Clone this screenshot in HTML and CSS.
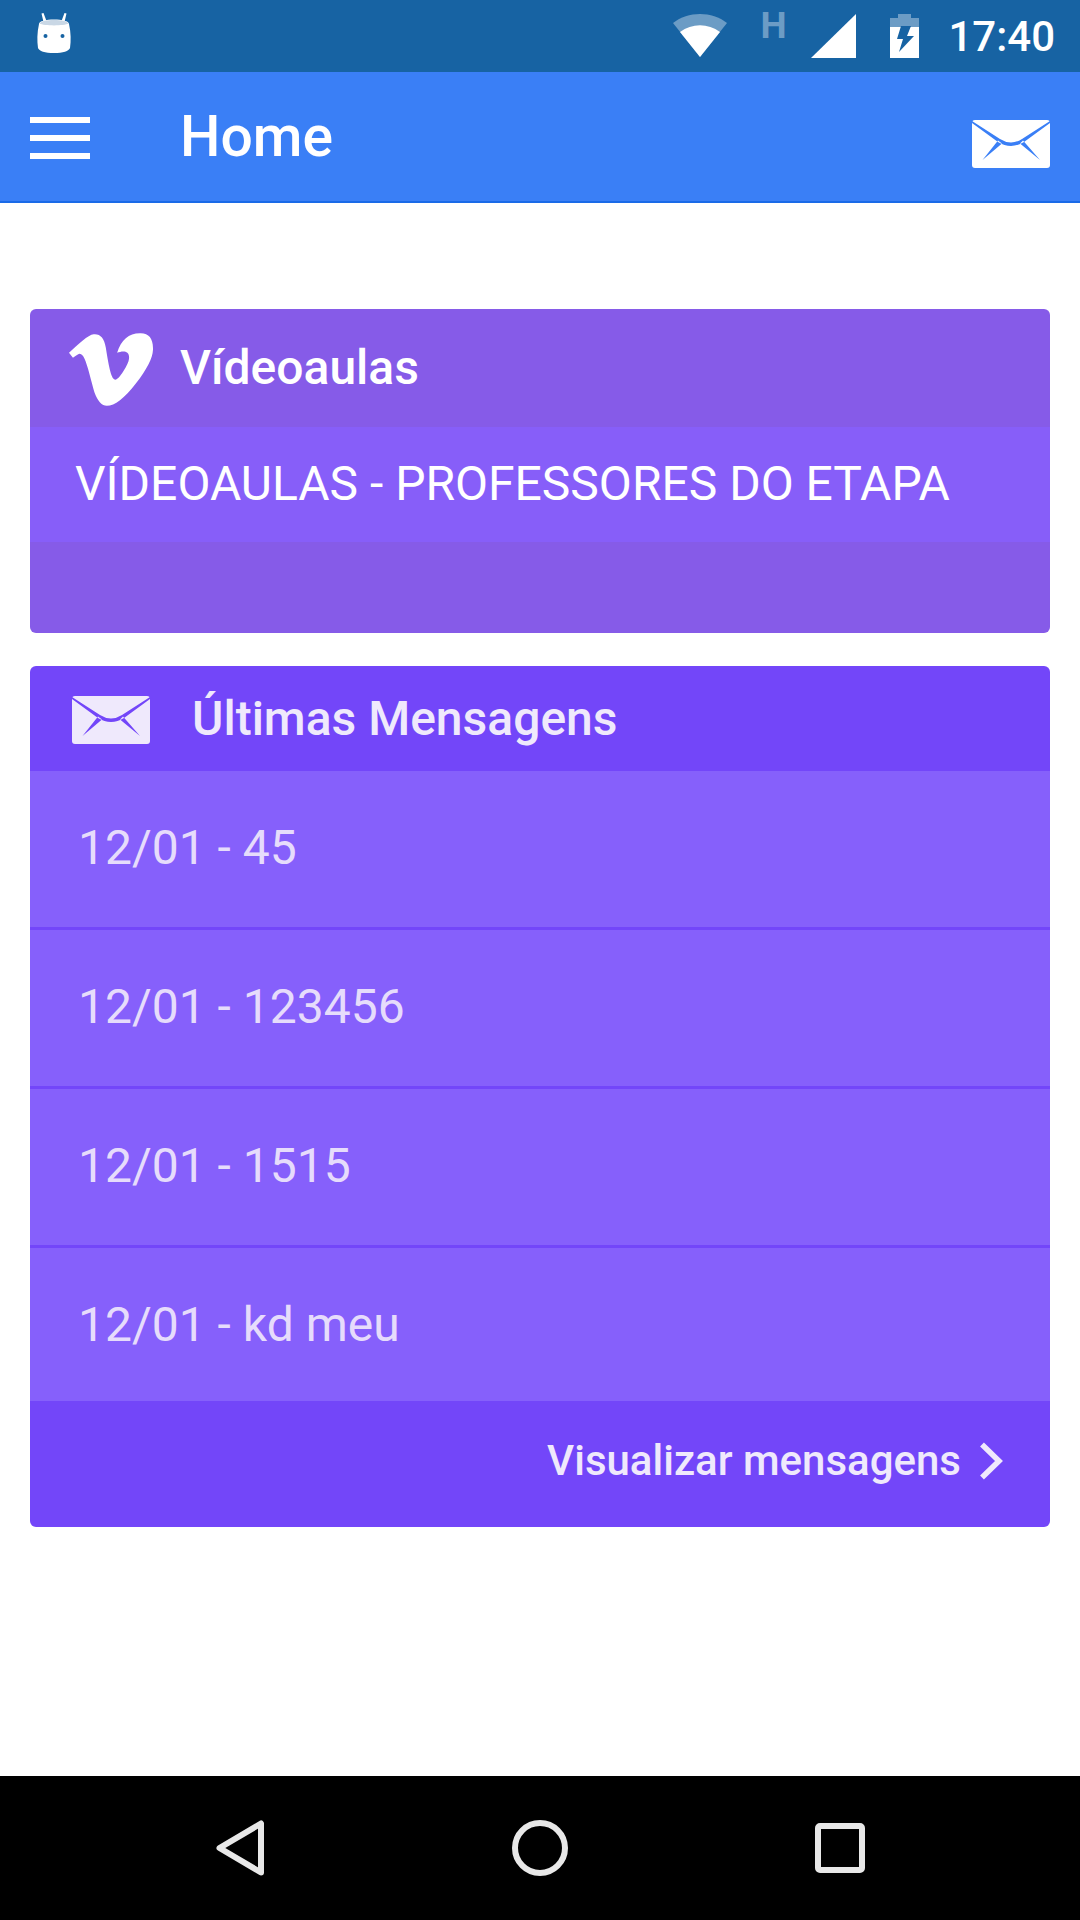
FILE: index.html
```html
<!DOCTYPE html>
<html lang="pt">
<head>
<meta charset="utf-8">
<title>Home</title>
<link rel="stylesheet" href="styles.css">
</head>
<body>
<div class="screen">
  <header class="status">
    <svg class="ic-android" viewBox="0 0 34 40"><path class="w" d="M6.500 9 4.500 0.500 6.500 0 9.500 8ZM27.500 9 29.500 0.500 27.500 0 24.500 8Z"/><path class="w" d="M2 11C2 8 9 6.500 17 6.500S32 8 32 11C34 20 34 28 33 35 32 38 26 40 17 40S2 38 1 35C0 28 0 20 2 11Z"/><path class="dim" d="M2.500 10.500C4 8 10 7 17 7S30 8 31.500 10.500C27 13 7 13 2.500 10.500Z"/><circle class="eye" cx="8.500" cy="23" r="2"/><circle class="eye" cx="25.500" cy="23" r="2"/></svg>
    <span class="status-fill"></span>
    <svg class="ic-wifi" viewBox="0 0 54 43"><path class="faint" d="M27 43 0 9C15-3 39-3 54 9Z"/><path class="w" d="M27 43 7 18C19 9 35 9 47 18Z"/></svg>
    <span class="net">H</span>
    <svg class="ic-signal" viewBox="0 0 45 44"><path class="w" d="M45 0V44H0Z"/></svg>
    <svg class="ic-batt" viewBox="0 0 29 44"><path class="faint" d="M8 0H21V4H29V13H0V4H8Z"/><path class="w" d="M0 13H29V44H0Z"/><path class="cut" d="M11 12H21L17 22H24L9 38 13 25H7Z"/></svg>
    <span class="clock">17:40</span>
  </header>

  <nav class="appbar">
    <div class="burger"><i></i><i></i><i></i></div>
    <h1 class="title">Home</h1>
    <svg class="env env-app" viewBox="0 0 78 48"><rect class="env-body" width="78" height="48" rx="3"/><path class="env-line" d="M0 1 28 19Q39 26 50 19L78 1V3L52 22Q39 30 26 22L0 3ZM26 20.500 10.500 40 30 23.500ZM48 23.500 68 40 51 20.500Z"/></svg>
  </nav>

  <main class="content">
    <section class="card card-video">
      <div class="card-head head-video">
        <svg class="vimeo" viewBox="0 64 448 388"><path d="M447.800 153.600c-2 43.600-32.400 103.300-91.400 179.100-60.900 79.200-112.400 118.800-154.600 118.800-26.100 0-48.200-24.100-66.300-72.300C100.300 250 85.300 174.300 56.200 174.300c-3.400 0-15.100 7.100-35.200 21.100L0 168.200c51.600-45.300 100.900-95.700 131.800-98.500 34.900-3.400 56.300 20.500 64.400 71.500 28.700 181.500 41.400 208.900 93.600 126.700 18.700-29.600 28.800-52.100 30.200-67.600 4.800-45.900-35.800-42.800-63.300-31 22-72.100 64.100-107.100 126.200-105.100 45.800 1.200 67.500 31.100 64.900 89.400z"/></svg>
        <h2 class="card-title">Vídeoaulas</h2>
      </div>
      <div class="video-row">VÍDEOAULAS - PROFESSORES DO ETAPA</div>
      <div class="video-foot"></div>
    </section>

    <section class="card card-msg">
      <div class="card-head head-msg">
        <svg class="env env-msg" viewBox="0 0 78 48"><rect class="env-body" width="78" height="48" rx="3"/><path class="env-line" d="M0 1 28 19Q39 26 50 19L78 1V3L52 22Q39 30 26 22L0 3ZM26 20.500 10.500 40 30 23.500ZM48 23.500 68 40 51 20.500Z"/></svg>
        <h2 class="card-title">Últimas Mensagens</h2>
      </div>
      <ul class="msgs">
        <li class="msg">12/01 - 45</li>
        <li class="msg">12/01 - 123456</li>
        <li class="msg">12/01 - 1515</li>
        <li class="msg">12/01 - kd meu</li>
      </ul>
      <div class="card-foot">
        <span class="more">Visualizar mensagens</span>
        <svg class="chev" viewBox="0 0 24 38"><path d="M3 2.500 20 19 3 35.500"/></svg>
      </div>
    </section>
  </main>

  <footer class="navbar">
    <svg class="nav-ic nav-back" viewBox="0 0 48 56"><path d="M45 3.500V52.500L3.500 28Z"/></svg>
    <svg class="nav-ic nav-home" viewBox="0 0 56 56"><circle cx="28" cy="28" r="25"/></svg>
    <svg class="nav-ic nav-recent" viewBox="0 0 50 50"><rect x="3" y="3" width="44" height="44" rx="2"/></svg>
  </footer>
</div>
</body>
</html>
```

FILE: styles.css
```css
* { box-sizing: border-box; }
html, body { margin: 0; padding: 0; }
body { font-family: Roboto, "Noto Sans", sans-serif; background: #fff; }
.screen { width: 1080px; height: 1920px; display: flex; flex-direction: column; overflow: hidden; }

/* status bar */
.status { height: 72px; flex: none; background: #1763a3; display: flex; align-items: flex-start; padding-left: 37px; color: #fff; }
.status-fill { flex: 1; }
.status .w { fill: #fff; }
.status .faint { fill: #6c9cc5; }
.status .dim { fill: #c9d7e5; }
.status .eye, .status .cut { fill: #1763a3; }
.ic-android { width: 34px; height: 40px; margin-top: 13px; }
.ic-wifi { width: 54px; height: 43px; margin-top: 14px; }
.net { width: 24px; margin: 7px 0 0 33px; font: 700 37px/37px Roboto, sans-serif; color: #6c9cc5; }
.ic-signal { width: 45px; height: 44px; margin: 14px 0 0 27px; }
.ic-batt { width: 29px; height: 44px; margin: 14px 0 0 34px; }
.clock { margin: 15px 25px 0 29px; font: 500 42px/44px Roboto, sans-serif; color: #fff; }

/* app bar */
.appbar { height: 131px; flex: none; background: #3a7ff6; border-bottom: 2px solid #1a6ae8; display: flex; align-items: center; padding: 0 30px; color: #fff; }
.burger { width: 60px; margin-top: 2px; display: flex; flex-direction: column; gap: 12px; }
.burger i { display: block; height: 6px; background: #fff; }
.title { flex: 1; margin: 0 0 0 90px; font: 500 57px/64px Roboto, sans-serif; color: #fff; }
.env { display: block; flex: none; width: 78px; height: 48px; }
.env-app { margin-top: 14px; }
.env-msg { margin-top: 2px; }
.env-app .env-body { fill: #fff; }
.env-app .env-line { fill: #3a7ff6; }
.env-msg .env-body { fill: #efe9fc; }
.env-msg .env-line { fill: #7346f9; }

/* content */
.content { flex: 1; padding: 106px 30px 0; display: flex; flex-direction: column; gap: 33px; }
.card { border-radius: 6px; overflow: hidden; }
.card-head { display: flex; align-items: center; }
.card-title { margin: 0; font: 500 48px/56px Roboto, sans-serif; }

.head-video { height: 118px; background: #865be8; padding-left: 39px; color: #fff; }
.vimeo { width: 84px; height: 73px; margin: 2px 27px 0 0; fill: #fff; }
.video-row { height: 115px; background: #875ef9; color: #fff; font: 400 48px/114px Roboto, sans-serif; padding-left: 45px; }
.video-foot { height: 91px; background: #865be8; }

.head-msg { height: 105px; background: #7346f9; padding-left: 42px; color: #efe9fc; }
.head-msg .card-title { margin-left: 42px; }
.msgs { list-style: none; margin: 0; padding: 0; }
.msg { height: 159px; background: #8660fb; border-bottom: 3px solid #7346f9; color: #e6dcfb; font: 400 48px/154px Roboto, sans-serif; padding-left: 48px; }
.msg:last-child { height: 153px; border-bottom: 0; }
.card-foot { height: 126px; padding-bottom: 6px; background: #7346f9; display: flex; align-items: center; justify-content: flex-end; padding-right: 47px; color: #efe9fc; }
.more { font: 500 42px/50px Roboto, sans-serif; }
.chev { width: 24px; height: 38px; margin-left: 18px; fill: none; stroke: #efe9fc; stroke-width: 5.500; }

/* nav bar */
.navbar { height: 144px; flex: none; background: #000; display: flex; align-items: center; padding-left: 216px; }
.nav-ic { display: block; fill: none; stroke: #e8e8e8; stroke-width: 6; stroke-linejoin: round; }
.nav-back { width: 48px; height: 56px; }
.nav-home { width: 56px; height: 56px; margin-left: 248px; }
.nav-recent { width: 50px; height: 50px; margin-left: 247px; }
```
